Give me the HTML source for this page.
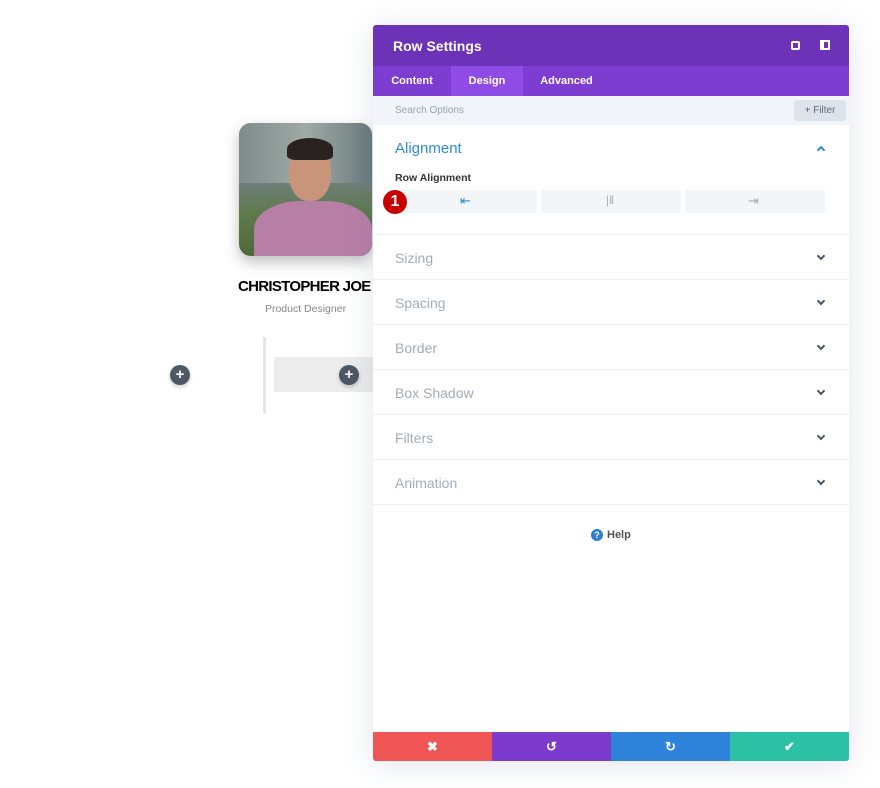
<!DOCTYPE html>
<html><head><style>
*{margin:0;padding:0;box-sizing:border-box}
body{width:880px;height:788px;background:#fff;font-family:"Liberation Sans",sans-serif;position:relative;overflow:hidden}
.abs{position:absolute}
.plus{position:absolute;width:20px;height:20px;border-radius:50%;background:#4c5866;color:#fff;font-size:15px;font-weight:bold;line-height:20px;text-align:center;box-shadow:0 2px 4px rgba(0,0,0,.2)}
.panel{position:absolute;left:373px;top:25px;width:476px;height:736px;background:#fff;box-shadow:0 4px 30px rgba(60,80,140,.15);border-radius:3px;overflow:hidden}
.hdr{height:41px;background:#6c32b7;color:#fff;font-size:14px;font-weight:bold;padding:13px 20px}
.tabs{height:30px;background:#7e3dd1;display:flex;color:#fff;font-size:11px;font-weight:bold}
.tabs div{height:30px;line-height:30px;text-align:center}
.search{height:29px;background:#f1f5f9;font-size:10px;color:#98a2ad;padding:9px 22px;position:relative}
.filter{position:absolute;right:3px;top:4px;width:52px;height:21px;background:#dde3ea;border-radius:3px;color:#5b6b7a;font-size:10px;line-height:21px;text-align:center}
.sec{height:45px;border-top:1px solid #eef0f3;font-size:14px;color:#a3acb7;padding:15px 22px 0;position:relative}
.chev{position:absolute;right:25px;top:18px;width:6px;height:6px;border-right:2px solid #4a5563;border-bottom:2px solid #4a5563;transform:rotate(45deg)}
.btn{position:absolute;width:140px;height:23px;background:#f3f6f9;border-radius:2px}
.foot{position:absolute;left:0;top:707px;width:476px;height:29px;display:flex}
.foot div{flex:1;color:#fff;text-align:center;font-size:13px;font-weight:bold;line-height:29px}
</style></head><body>
<div class="abs" style="left:239px;top:123px;width:133px;height:133px;border-radius:12px;overflow:hidden;box-shadow:0 6px 14px rgba(0,0,0,.25);background:linear-gradient(180deg,#8a9a98 0%,#6f7f78 45%,#5d7a48 70%,#4f6a3a 100%)">
<div class="abs" style="left:0;top:0;width:133px;height:60px;background:linear-gradient(90deg,#7e8c8a,#a0aaa6 50%,#6a7b7d)"></div>
<div class="abs" style="left:50px;top:20px;width:42px;height:58px;border-radius:45%;background:#c9957a"></div>
<div class="abs" style="left:48px;top:15px;width:46px;height:22px;border-radius:50% 50% 20% 20%;background:#2a2220"></div>
<div class="abs" style="left:15px;top:78px;width:118px;height:70px;border-radius:40% 40% 0 0;background:#b87fa6"></div>
</div>
<div class="abs" style="left:238px;top:278px;font-size:15px;font-weight:bold;color:#000;white-space:nowrap;letter-spacing:-0.7px">CHRISTOPHER JOE</div>
<div class="abs" style="left:239px;top:303px;width:133px;text-align:center;font-size:10.5px;color:#888">Product Designer</div>
<div class="abs" style="left:263px;top:337px;width:3px;height:76px;background:#e6e6e6"></div>
<div class="abs" style="left:274px;top:357px;width:99px;height:35px;background:#ececec"></div>
<div class="plus" style="left:170px;top:365px">+</div>
<div class="plus" style="left:339px;top:365px">+</div>
<div class="panel">
<div class="hdr">Row Settings
<span class="abs" style="left:418px;top:16px;width:9px;height:9px;border:2px solid #fff;border-radius:2px"></span>
<span class="abs" style="left:447px;top:15px;width:10px;height:10px;border:2px solid #fff;border-left-width:4px"></span></div>
<div class="tabs"><div style="width:78px">Content</div><div style="width:72px;background:#8e4be6">Design</div><div style="width:87px">Advanced</div></div>
<div class="search">Search Options<div class="filter">+ Filter</div></div>
<div style="height:109px;position:relative">
<div class="abs" style="left:22px;top:15px;font-size:15px;color:#2e8ccf">Alignment</div>
<div class="abs" style="right:25px;top:22px;width:6px;height:6px;border-left:2px solid #2e8ccf;border-top:2px solid #2e8ccf;transform:rotate(45deg)"></div>
<div class="abs" style="left:22px;top:47px;font-size:10.5px;font-weight:bold;color:#333">Row Alignment</div>
<div class="btn" style="left:24px;top:65px"><span class="abs" style="left:63px;top:3px;color:#2e8ccf;font-size:13px">⇤</span></div>
<div class="btn" style="left:168px;top:65px"><span class="abs" style="left:65px;top:3px;color:#aab;font-size:12px">|‖</span></div>
<div class="btn" style="left:312px;top:65px"><span class="abs" style="left:63px;top:3px;color:#aab;font-size:13px">⇥</span></div>
<div class="abs" style="left:10px;top:65px;width:24px;height:24px;border-radius:50%;background:#c80000;color:#fff;font-size:16px;font-weight:bold;text-align:center;line-height:24px">1</div>
</div>
<div class="sec">Sizing<i class="chev"></i></div>
<div class="sec">Spacing<i class="chev"></i></div>
<div class="sec">Border<i class="chev"></i></div>
<div class="sec">Box Shadow<i class="chev"></i></div>
<div class="sec">Filters<i class="chev"></i></div>
<div class="sec">Animation<i class="chev"></i></div>
<div style="border-top:1px solid #eef0f3;height:1px"></div>
<div class="abs" style="left:218px;top:504px;font-size:11px;color:#555;font-weight:bold"><span style="display:inline-block;width:12px;height:12px;border-radius:50%;background:#2e7fd0;color:#fff;font-size:9px;text-align:center;line-height:12px;margin-right:4px">?</span>Help</div>
<div class="foot"><div style="background:#ef5555">✖</div><div style="background:#7c3bcc">↺</div><div style="background:#2d83d9">↻</div><div style="background:#2cc0a5">✔</div></div>
</div>
</body></html>
